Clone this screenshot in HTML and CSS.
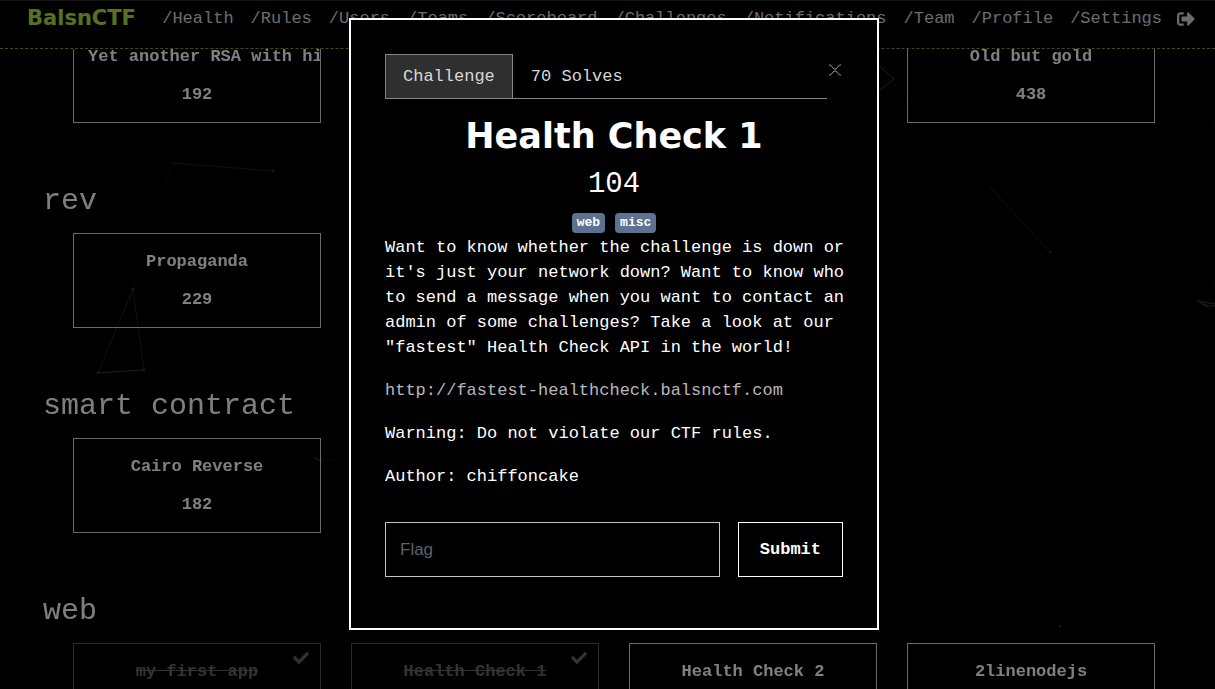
FILE: index.html
```html
<!DOCTYPE html>
<html lang="en">
<head>
<meta charset="utf-8">
<meta name="viewport" content="width=device-width, initial-scale=1">
<title>BalsnCTF</title>
<link rel="stylesheet" href="styles.css">
</head>
<body>
<svg class="particles" viewBox="0 0 1215 689" preserveAspectRatio="xMinYMin slice" aria-hidden="true">
  <g class="faint">
    <path d="M172 163 133 289M892 82 990 187M1189 70 1215 125M1198 301 1215 264M1208 300 1215 280M323 461 349 458"/>
  </g>
  <g class="dim">
    <path d="M172 163 273 171M98 373 133 289 144 370M990 187 1050 252"/>
  </g>
  <g class="bright">
    <path d="M98 373 144 370M313 457 322 461M860 48 894 79 860 106M1198 301 1206 306H1215M1198 301 1215 304M1201 303 1208 306"/>
    <circle cx="273" cy="171" r="1"/><circle cx="133" cy="289" r="1"/><circle cx="98" cy="373" r="1"/><circle cx="144" cy="370" r="1"/><circle cx="1050" cy="252" r=".8"/><circle cx="1060" cy="626" r=".8"/>
  </g>
</svg>

<header class="navbar">
  <a class="brand" href="#">BalsnCTF</a>
  <nav class="links">
    <a href="#">/Health</a>
    <a href="#">/Rules</a>
    <a href="#">/Users</a>
    <a href="#">/Teams</a>
    <a href="#">/Scoreboard</a>
    <a href="#">/Challenges</a>
    <a href="#">/Notifications</a>
    <a href="#">/Team</a>
    <a href="#">/Profile</a>
    <a href="#">/Settings</a>
    <a href="#" aria-label="Logout"><svg class="logout" viewBox="0 0 512 512" aria-hidden="true"><path d="M497 273 329 441c-15 15-41 4.500-41-17v-96H152c-13.300 0-24-10.700-24-24v-96c0-13.300 10.700-24 24-24h136V88c0-21.400 25.900-32 41-17l168 168c9.300 9.400 9.300 24.600 0 34zM192 436v-40c0-6.600-5.400-12-12-12H96c-17.700 0-32-14.300-32-32V160c0-17.700 14.300-32 32-32h84c6.600 0 12-5.400 12-12V76c0-6.600-5.400-12-12-12H96c-53 0-96 43-96 96v192c0 53 43 96 96 96h84c6.600 0 12-5.400 12-12z"/></svg></a>
  </nav>
</header>

<main class="board">
  <section class="category">
    <div class="cards">
      <button class="card"><span>Yet another RSA with hi</span><span>192</span></button>
      <button class="card last"><span>Old but gold</span><span>438</span></button>
    </div>
  </section>
  <section class="category">
    <h3>rev</h3>
    <div class="cards">
      <button class="card"><span>Propaganda</span><span>229</span></button>
    </div>
  </section>
  <section class="category">
    <h3>smart contract</h3>
    <div class="cards">
      <button class="card"><span>Cairo Reverse</span><span>182</span></button>
    </div>
  </section>
  <section class="category">
    <h3>web</h3>
    <div class="cards">
      <button class="card solved"><span>my first app</span><svg class="check" viewBox="0 0 512 512" aria-hidden="true"><path d="M173.900 439.400 7.500 273c-10-10-10-26.200 0-36.200l36.200-36.200c10-10 26.200-10 36.200 0L192 312.700 432.100 72.600c10-10 26.200-10 36.200 0l36.200 36.200c10 10 10 26.200 0 36.200L210.100 439.400c-10 10-26.200 10-36.200 0z"/></svg></button>
      <button class="card solved"><span>Health Check 1</span><svg class="check" viewBox="0 0 512 512" aria-hidden="true"><path d="M173.900 439.400 7.500 273c-10-10-10-26.200 0-36.200l36.200-36.200c10-10 26.200-10 36.200 0L192 312.700 432.100 72.600c10-10 26.200-10 36.200 0l36.200 36.200c10 10 10 26.200 0 36.200L210.100 439.400c-10 10-26.200 10-36.200 0z"/></svg></button>
      <button class="card"><span>Health Check 2</span></button>
      <button class="card"><span>2linenodejs</span></button>
    </div>
  </section>
</main>

<div class="backdrop">
  <div class="modal" role="dialog" aria-modal="true" aria-labelledby="challenge-name">
    <div class="modal-top">
      <div class="tabs" role="tablist">
        <button class="tab active" role="tab" aria-selected="true">Challenge</button>
        <button class="tab" role="tab" aria-selected="false">70 Solves</button>
      </div>
      <button class="close" aria-label="Close"><svg viewBox="0 0 14 14" aria-hidden="true"><path d="M1 2.500h1.500L6 6.500h2L11.500 2.500H13M1 12.500h1.500L6 8.500h2L11.500 12.500H13"/></svg></button>
    </div>
    <h2 id="challenge-name">Health Check 1</h2>
    <div class="value">104</div>
    <div class="tags"><span class="tag">web</span><span class="tag">misc</span></div>
    <div class="description">
      <p>Want to know whether the challenge is down or it's just your network down? Want to know who to send a message when you want to contact an admin of some challenges? Take a look at our "fastest" Health Check API in the world!</p>
      <p><a href="#">http://fastest-healthcheck.balsnctf.com</a></p>
      <p>Warning: Do not violate our CTF rules.</p>
      <p>Author: chiffoncake</p>
    </div>
    <form class="answer">
      <input type="text" placeholder="Flag" aria-label="Flag">
      <button type="button">Submit</button>
    </form>
  </div>
</div>
</body>
</html>
```
FILE: styles.css
```css
* { box-sizing: border-box; }

html, body { height: 100%; overflow: hidden; background: #000; }

body {
  margin: 0;
  color: #fff;
  font: 17px/25px "Liberation Mono", monospace;
}

button, input { margin: 0; font: inherit; color: inherit; background: none; border: 0; border-radius: 0; }
a { color: inherit; text-decoration: none; }
h2, h3, p { margin: 0; }

.particles { position: fixed; inset: 0; width: 100%; height: 100%; fill: none; stroke-width: 1; }
.faint { stroke: #0d0f06; }
.dim { stroke: #22260a; }
.bright { stroke: #3a4410; }

.navbar {
  position: fixed;
  top: 0;
  left: 0;
  right: 0;
  z-index: 1;
  display: flex;
  align-items: flex-start;
  justify-content: space-between;
  height: 49px;
  padding: 5px 20px 0 27px;
  background: #000;
  border-top: 1px solid #262626;
  border-bottom: 1px dashed #7c982a;
}
.brand { color: #b0e040; font: bold 21px/25px "DejaVu Sans", sans-serif; }
.links { display: flex; align-items: center; gap: 17px; color: #d8d8d8; }
.links a:last-child { margin-left: -2px; }
.logout { display: block; width: 18px; height: 18px; fill: #d8d8d8; }

.board { position: relative; height: 100%; padding: 28px 60px 0 43px; overflow: hidden; }
.category { padding-bottom: 58px; }
.category h3 { margin-bottom: 12px; font-size: 30px; font-weight: 400; line-height: 40px; }
.cards { display: grid; grid-template-columns: repeat(4, minmax(0, 1fr)); gap: 30px; margin-left: 30px; }
.card {
  position: relative;
  display: flex;
  flex-direction: column;
  gap: 12px;
  min-height: 95px;
  padding: 15px 14px 14px;
  overflow: hidden;
  font-weight: 700;
  line-height: 26px;
  text-align: center;
  white-space: nowrap;
  border: 1px solid #d4d4d4;
}
.card span { width: 100%; }
.last { grid-column: 4; }
.solved { opacity: .4; text-decoration: line-through; }
.check { position: absolute; top: 6px; right: 11px; width: 16px; height: 16px; fill: #fff; }

.backdrop {
  position: fixed;
  inset: 0;
  z-index: 2;
  display: flex;
  align-items: flex-start;
  justify-content: center;
  padding: 18px 0 0 13px;
  background: rgba(0, 0, 0, .5);
}
.modal {
  width: 100%;
  max-width: 530px;
  padding: 34px 34px 51px;
  text-align: center;
  background: #000;
  border: 2px solid #fff;
}
.modal-top { display: flex; align-items: flex-start; }
.tabs { display: flex; flex: 1; border-bottom: 1px solid #858585; }
.tab { padding: 9px 17px; color: #d8d8d8; border: 1px solid transparent; border-bottom: 0; }
.active { background: #2f2f2f; border-color: #858585; }
.close { width: 16px; padding: 8px 0 0 1px; }
.close svg { display: block; width: 14px; height: 15px; fill: none; stroke: #999; stroke-width: 1; }

.modal h2 { margin-top: 12px; font: bold 35px/50px "DejaVu Sans", sans-serif; }
.value { margin-top: 6px; font-size: 29px; line-height: 36px; }
.tags { display: flex; justify-content: center; gap: 10px; margin-top: 10px; }
.tag { padding: 0 5px; font-size: 13px; font-weight: 700; line-height: 20px; background: #5b7290; border-radius: 4px; }
.description { margin: 2px -4px 0 0; text-align: left; }
.description p { margin-bottom: 18px; }
.description a { color: #b8b8b8; }
.answer { display: flex; gap: 18px; margin-top: 33px; }
.answer input {
  flex: 1;
  min-width: 0;
  height: 55px;
  padding: 0 14px;
  font-family: "Liberation Sans", Arial, sans-serif;
  border: 1px solid #c4c4c4;
}
.answer input::placeholder { color: #5b626b; opacity: 1; }
.answer button { padding: 0 21px; font-weight: 700; border: 1px solid #fff; }
```
